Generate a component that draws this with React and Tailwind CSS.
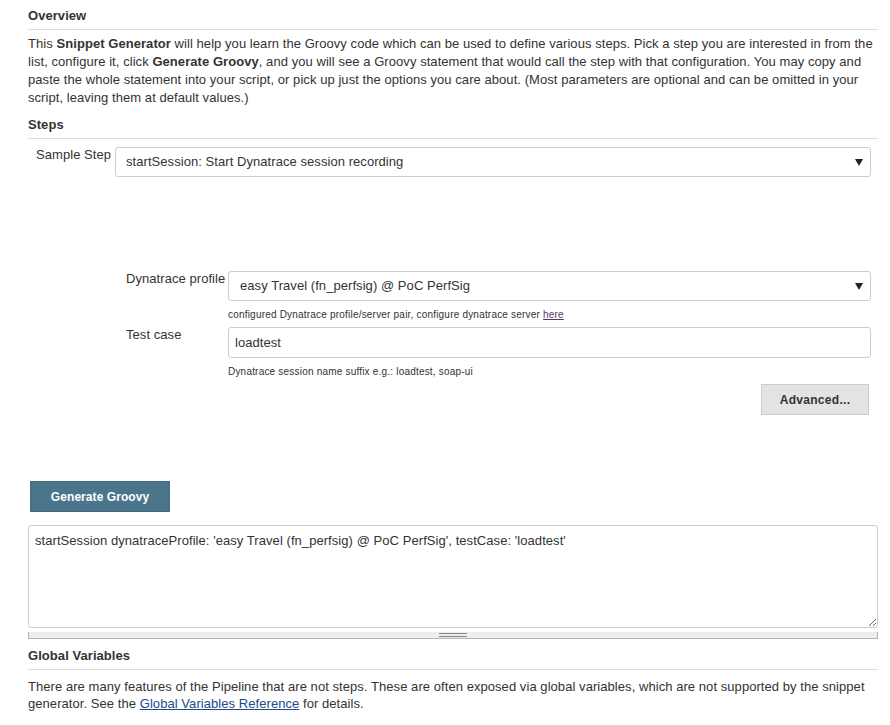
import React from 'react';

const font = { fontFamily: '"Liberation Sans", Arial, Helvetica, sans-serif' };

function Caret() {
  return (
    <svg width="8" height="7" viewBox="0 0 8 7" className="shrink-0">
      <path d="M0 0 H8 L4 7 Z" fill="#222" />
    </svg>
  );
}

function SelectBox({ value, className = '' }) {
  return (
    <div className={`flex items-center justify-between h-[30px] border border-[#ccc] rounded-[3px] bg-white pl-[10px] pr-[7px] ${className}`}>
      <span>{value}</span>
      <Caret />
    </div>
  );
}

function SectionTitle({ children, className = '' }) {
  return (
    <h2 className={`font-bold leading-[18px] pb-[4px] border-b border-[#ddd] ${className}`}>{children}</h2>
  );
}

export default function App() {
  return (
    <div className="w-[890px] min-h-[725px] bg-white pl-[28px] pr-[12px] pt-[7px] text-[13px] text-[#333] tracking-[0.06px]" style={font}>
      <SectionTitle>Overview</SectionTitle>
      <p className="mt-[5px] leading-[18px]">
        This <b>Snippet Generator</b> will help you learn the Groovy code which can be used to define various steps. Pick a step you are interested in from the<br />
        list, configure it, click <b>Generate Groovy</b>, and you will see a Groovy statement that would call the step with that configuration. You may copy and<br />
        paste the whole statement into your script, or pick up just the options you care about. (Most parameters are optional and can be omitted in your<br />
        script, leaving them at default values.)
      </p>

      <SectionTitle className="mt-[9px]">Steps</SectionTitle>

      {/* step selector */}
      <div className="flex mt-[8px] pl-[8px] mr-[7px]">
        <label className="w-[79px] shrink-0 leading-[16px]">Sample Step</label>
        <SelectBox value="startSession: Start Dynatrace session recording" className="flex-1" />
      </div>

      {/* step configuration */}
      <div className="mt-[94px] pl-[98px] mr-[7px]">
        <div className="flex">
          <label className="w-[102px] shrink-0 leading-[16px]">Dynatrace profile</label>
          <SelectBox value="easy Travel (fn_perfsig) @ PoC PerfSig" className="flex-1 pl-[11px]" />
        </div>
        <div className="pl-[102px] mt-[7px] text-[10px] leading-[14px] tracking-[0.2px]">
          configured Dynatrace profile/server pair, configure dynatrace server <a className="underline text-[#5c3566]">here</a>
        </div>
        <div className="flex mt-[5px]">
          <label className="w-[102px] shrink-0 leading-[16px]">Test case</label>
          <div className="flex-1 h-[31px] border border-[#ccc] rounded-[3px] flex items-center pl-[6px]">loadtest</div>
        </div>
        <div className="pl-[102px] mt-[7px] text-[10px] leading-[14px] tracking-[0.2px]">
          Dynatrace session name suffix e.g.: loadtest, soap-ui
        </div>
        <div className="flex justify-end mt-[5px] mr-[2px]">
          <button className="w-[108px] h-[31px] bg-[#e3e3e3] border border-[#ccc] text-[12px] font-bold text-[#333] tracking-[0.3px]">Advanced...</button>
        </div>
      </div>

      <button className="mt-[66px] ml-[2px] w-[140px] h-[31px] bg-[#4b758b] border border-[#44697d] text-white text-[12px] font-bold">Generate Groovy</button>

      <textarea
        readOnly
        value="startSession dynatraceProfile: 'easy Travel (fn_perfsig) @ PoC PerfSig', testCase: 'loadtest'"
        className="block mt-[13px] w-full h-[103px] border border-[#ccc] rounded-[3px] px-[6px] py-[6px] text-[13px] leading-[18px] text-[#333] tracking-[0.06px] outline-none"
        style={font}
      />
      <div className="mt-[4px] h-[7px] bg-[#eee] border border-t-0 border-[#b5b5b5] flex items-center justify-center">
        <div className="w-[28px] h-[4px] border-y border-[#888]" />
      </div>

      <SectionTitle className="mt-[8px]">Global Variables</SectionTitle>
      <p className="mt-[8px] leading-[17px] pb-[10px]">
        There are many features of the Pipeline that are not steps. These are often exposed via global variables, which are not supported by the snippet<br />
        generator. See the <a className="underline text-[#204a87]">Global Variables Reference</a> for details.
      </p>
    </div>
  );
}
